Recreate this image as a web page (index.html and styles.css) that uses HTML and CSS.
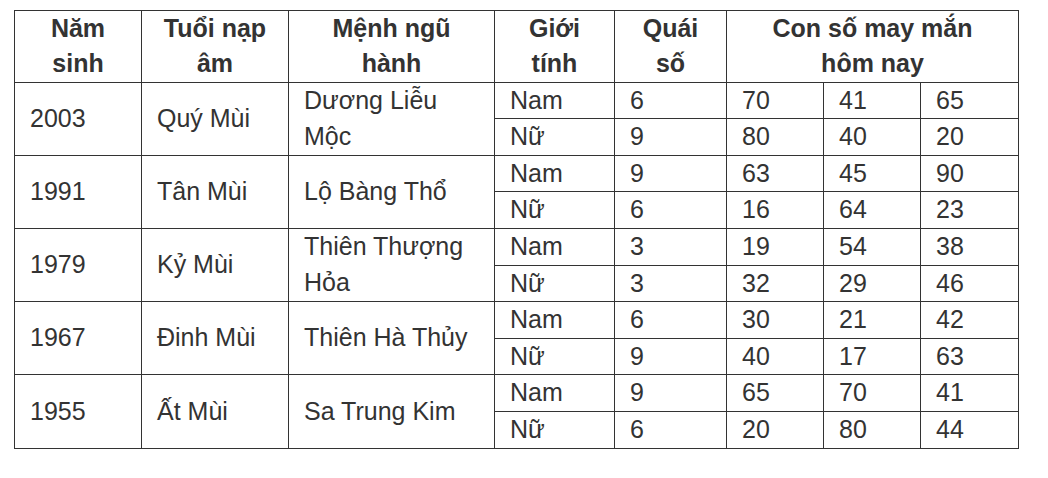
FILE: index.html
```html
<!DOCTYPE html>
<html lang="vi">
<head>
<meta charset="utf-8">
<link rel="stylesheet" href="styles.css">
</head>
<body>
<div class="wrap">
<table class="luck">
  <colgroup>
    <col class="c1"><col class="c2"><col class="c3"><col class="c4"><col class="c5"><col class="c6"><col class="c7"><col class="c8">
  </colgroup>
  <thead>
    <tr>
      <th>Năm<br>sinh</th>
      <th>Tuổi nạp<br>âm</th>
      <th>Mệnh ngũ<br>hành</th>
      <th>Giới<br>tính</th>
      <th>Quái<br>số</th>
      <th colspan="3">Con số may mắn<br>hôm nay</th>
    </tr>
  </thead>
  <tbody>
    <tr><td rowspan="2">2003</td><td rowspan="2">Quý Mùi</td><td rowspan="2">Dương Liễu Mộc</td><td>Nam</td><td>6</td><td>70</td><td>41</td><td>65</td></tr>
    <tr><td>Nữ</td><td>9</td><td>80</td><td>40</td><td>20</td></tr>
    <tr><td rowspan="2">1991</td><td rowspan="2">Tân Mùi</td><td rowspan="2">Lộ Bàng Thổ</td><td>Nam</td><td>9</td><td>63</td><td>45</td><td>90</td></tr>
    <tr><td>Nữ</td><td>6</td><td>16</td><td>64</td><td>23</td></tr>
    <tr><td rowspan="2">1979</td><td rowspan="2">Kỷ Mùi</td><td rowspan="2">Thiên Thượng Hỏa</td><td>Nam</td><td>3</td><td>19</td><td>54</td><td>38</td></tr>
    <tr><td>Nữ</td><td>3</td><td>32</td><td>29</td><td>46</td></tr>
    <tr><td rowspan="2">1967</td><td rowspan="2">Đinh Mùi</td><td rowspan="2">Thiên Hà Thủy</td><td>Nam</td><td>6</td><td>30</td><td>21</td><td>42</td></tr>
    <tr><td>Nữ</td><td>9</td><td>40</td><td>17</td><td>63</td></tr>
    <tr><td rowspan="2">1955</td><td rowspan="2">Ất Mùi</td><td rowspan="2">Sa Trung Kim</td><td>Nam</td><td>9</td><td>65</td><td>70</td><td>41</td></tr>
    <tr><td>Nữ</td><td>6</td><td>20</td><td>80</td><td>44</td></tr>
  </tbody>
</table>
</div>
</body>
</html>
```
FILE: styles.css
```css
html, body {
  margin: 0;
  padding: 0;
  background: #fff;
}
.wrap {
  padding: 10px 14px 0 14px;
}
.luck {
  border-collapse: collapse;
  table-layout: fixed;
  width: 1005px;
  font-family: "Liberation Sans", Arial, sans-serif;
  font-size: 25px;
  color: #333;
}
.c1 { width: 127px; }
.c2 { width: 147px; }
.c3 { width: 206px; }
.c4 { width: 120px; }
.c5 { width: 112px; }
.c6 { width: 97px; }
.c7 { width: 97px; }
.c8 { width: 98px; }
.luck th,
.luck td {
  border: 1px solid #333;
  padding: 0 10px 0 15px;
  line-height: 35.6px;
  vertical-align: middle;
  text-align: left;
}
.luck th {
  font-size: 25px;
  font-weight: bold;
  text-align: center;
  padding: 0;
  line-height: 35.3px;
}
```
